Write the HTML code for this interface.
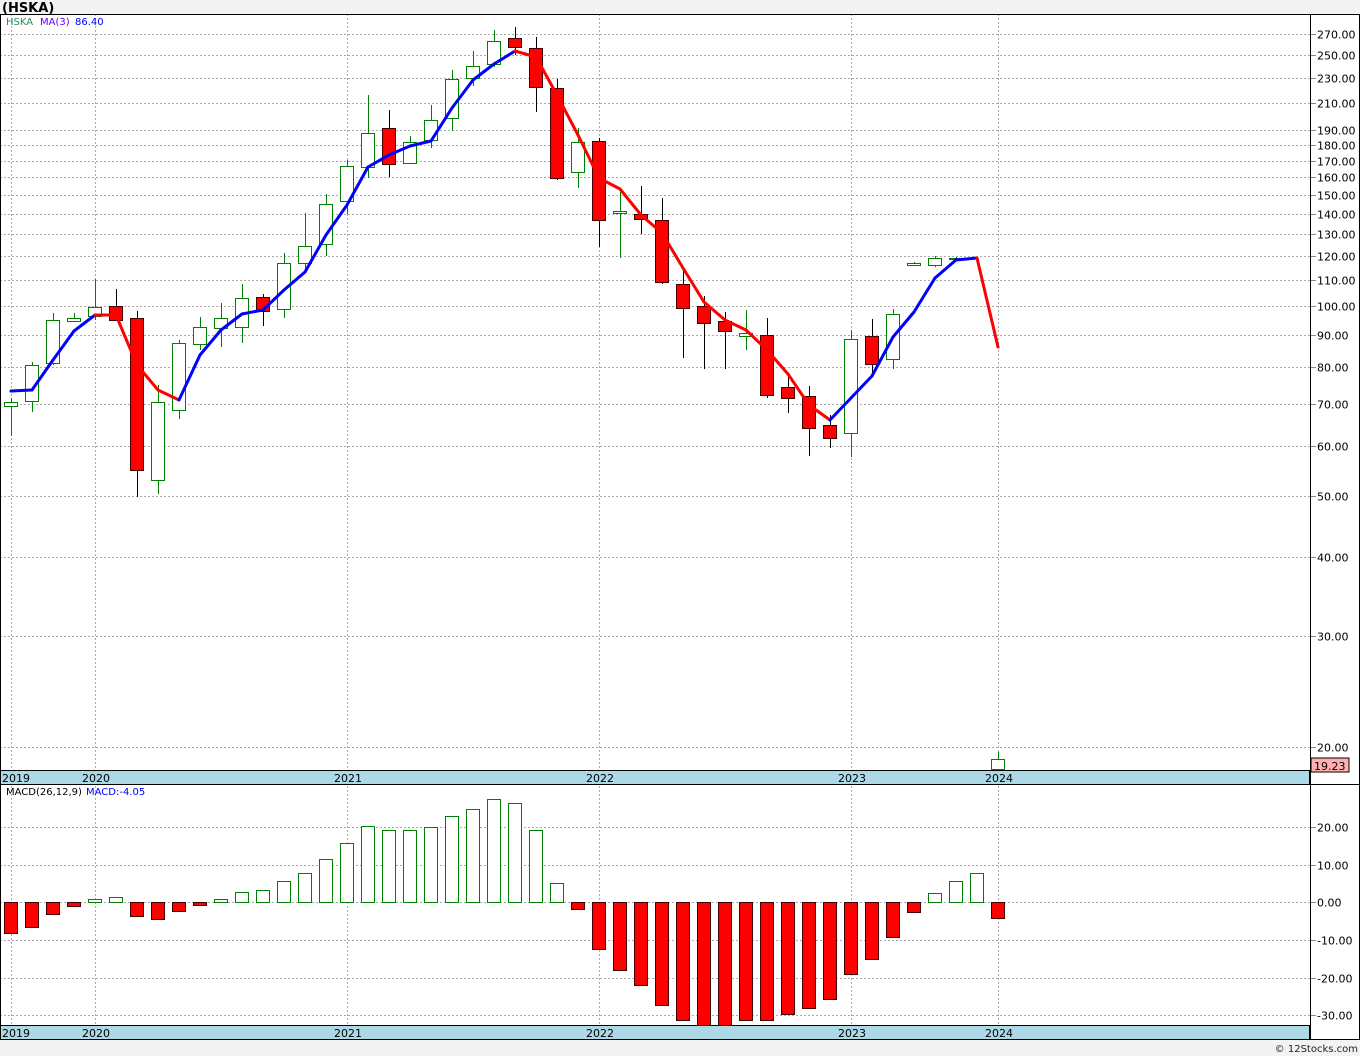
<!DOCTYPE html>
<html><head><meta charset="utf-8"><style>
html,body{margin:0;padding:0;background:#f3f3f3;width:1360px;height:1056px;overflow:hidden;font-family:"Liberation Sans","DejaVu Sans",sans-serif}
svg{position:absolute;left:0;top:0}
</style></head><body>
<svg id="s" width="1360" height="1056" xmlns="http://www.w3.org/2000/svg" font-family="DejaVu Sans, Liberation Sans, sans-serif">
<rect x="0" y="14" width="1360" height="1026" fill="#fff"/>
<text x="2" y="12" font-size="13" font-weight="bold">(HSKA)</text>
<g id="g"></g>
<text x="1358" y="1052" font-size="10" text-anchor="end" fill="#222">© 12Stocks.com</text>
</svg>
<script>
var g=document.getElementById('g'),h='';
function L(x1,y1,x2,y2,c,w,d){h+='<line x1="'+x1+'" y1="'+y1+'" x2="'+x2+'" y2="'+y2+'" stroke="'+c+'" stroke-width="'+(w||1)+'"'+(d?' stroke-dasharray="'+d+'"':'')+'/>';}
function R(x,y,w,hh,f,s){h+='<rect x="'+x+'" y="'+y+'" width="'+w+'" height="'+hh+'" fill="'+f+'" stroke="'+s+'" stroke-width="1"/>';}
function T(x,y,t,c,sz,a){h+='<text x="'+x+'" y="'+y+'" font-size="'+(sz||11)+'" fill="'+(c||'#000')+'"'+(a?' text-anchor="'+a+'"':'')+'>'+t+'</text>';}
function py(p){return 747-273.9*Math.log(p/20);}
var prices=[270,250,230,210,190,180,170,160,150,140,130,120,110,100,90,80,70,60,50,40,30,20];
prices.forEach(function(p){var y=Math.round(py(p))+0.5;L(0,y,1310,y,'#aaa',1,'2,2');L(1310,y,1316,y,'#888');T(1317,y+4,p.toFixed(2),'#000',11);});
var macd=[[20,827],[10,865],[0,902],[-10,940],[-20,978],[-30,1015]];
macd.forEach(function(m){var y=m[1]+0.5;L(0,y,1310,y,'#aaa',1,'2,2');L(1310,y,1316,y,'#888');T(1317,y+4,m[0].toFixed(2),'#000',11);});
[11,95,347,599,851,998].forEach(function(x){L(x+0.5,14,x+0.5,1025,'#aaa',1,'2,2');});
R(0.5,770.5,1309,14,'#add8e6','#000');R(0.5,1025.5,1309,14,'#add8e6','#000');
[[2,'2019'],[82,'2020'],[334,'2021'],[586,'2022'],[838,'2023'],[985,'2024']].forEach(function(a){T(a[0],782,a[1],'#000',11);T(a[0],1037,a[1],'#000',11);});
var C=[[11,402,406,398,436,'w'],[32,365,401,362,412,'w'],[53,320,363,313,365,'w'],[74,318,321,313,322,'w'],[95,307,316,279,320,'w'],[116,306,320,289,320,'r'],[137,318,470,311,497,'r'],[158,402,480,385,494,'w'],[179,343,410,340,419,'w'],[200,327,344,317,350,'w'],[221,318,328,303,347,'w'],[242,298,327,284,343,'w'],[263,297,311,294,326,'r'],[284,263,309,253,318,'w'],[305,246,263,213,270,'w'],[326,204,244,194,256,'w'],[347,166,201,160,214,'w'],[368,133,167,95,178,'w'],[389,128,164,110,177,'r'],[410,142,163,136,164,'w'],[431,120,140,105,148,'w'],[452,79,118,70,131,'w'],[473,66,78,51,86,'w'],[494,41,64,30,67,'w'],[515,38,47,27,55,'r'],[536,48,87,37,112,'r'],[557,88,178,79,180,'r'],[578,142,172,128,188,'w'],[599,141,220,138,247,'r'],[620,211,213,192,258,'w'],[641,214,219,186,234,'r'],[662,220,282,198,284,'r'],[683,284,308,269,358,'r'],[704,306,323,296,369,'r'],[725,321,331,312,369,'r'],[746,333,336,310,350,'w'],[767,335,395,318,398,'r'],[788,387,398,376,413,'r'],[809,396,428,386,456,'r'],[830,425,438,415,448,'r'],[851,339,433,330,457,'w'],[872,336,364,319,375,'r'],[893,314,359,309,369,'w'],[914,263,265,262,266,'w'],[935,258,265,256,267,'w'],[956,258,259,257,260,'w'],[998,759,769,752,770,'w']];
C.forEach(function(c){var x=c[0]+0.5,up=c[5]=='w';L(x,c[3],x,c[4],up?'#008000':'#000');R(c[0]-6.5,c[1]+0.5,13,Math.max(c[2]-c[1],1),up?'#fff':'#f00',up?'#008000':'#400');});
var M=[[11,391],[32,390],[53,360],[74,331],[95,315],[116,315],[137,365],[158,390],[179,400],[200,355],[221,330],[242,314],[263,310],[284,290],[305,272],[326,235],[347,205],[368,167],[389,155],[410,146],[431,141],[452,108],[473,80],[494,64],[515,51],[536,57],[557,95],[578,135],[599,178],[620,189],[641,215],[662,233],[683,268],[704,302],[725,320],[746,330],[767,350],[788,374],[809,405],[830,420],[851,398],[872,376],[893,337],[914,312],[935,278],[956,260],[977,258],[998,347]];
function col(x){return (x<95||(x>=179&&x<515)||(x>=830&&x<977))?'#00f':'#f00';}
for(var i=0;i<M.length-1;i++){h+='<line x1="'+M[i][0]+'" y1="'+M[i][1]+'" x2="'+M[i+1][0]+'" y2="'+M[i+1][1]+'" stroke="'+col(M[i][0])+'" stroke-width="3" stroke-linecap="round"/>';}
var H=[[11,933],[32,927],[53,914],[74,906],[95,899],[116,897],[137,916],[158,919],[179,911],[200,905],[221,899],[242,892],[263,890],[284,881],[305,873],[326,859],[347,843],[368,826],[389,830],[410,830],[431,827],[452,816],[473,809],[494,799],[515,803],[536,830],[557,883],[578,909],[599,949],[620,970],[641,985],[662,1005],[683,1020],[704,1025],[725,1025],[746,1020],[767,1020],[788,1014],[809,1008],[830,999],[851,974],[872,959],[893,937],[914,912],[935,893],[956,881],[977,873],[998,918]];
H.forEach(function(b){var up=b[1]<902;var y0=up?b[1]:902,hh=Math.abs(b[1]-902);R(b[0]-6.5,y0+0.5,13,Math.max(hh,1),up?'#fff':'#f00',up?'#008000':'#400');});
R(0.5,14.5,1359,1025,'none','#000');L(1310.5,14,1310.5,1040,'#000');L(0,784.5,1360,784.5,'#000');
R(1311,758,38,14,'#ffb0b0','#000');T(1314,770,'19.23','#000',11);
T(6,25,'HSKA','#2e8b57',10);T(40,25,'MA(3)','#6600ff',10);T(75,25,'86.40','#00f',10);
T(6,795,'MACD(26,12,9)','#000',10);T(86,795,'MACD:-4.05','#00f',10);
g.innerHTML=h;
</script>
</body></html>
